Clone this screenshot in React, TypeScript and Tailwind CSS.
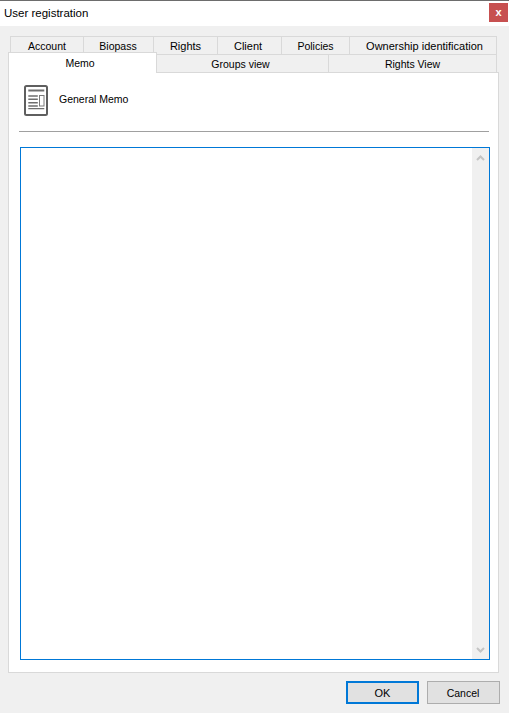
const FONT = "font-['Liberation_Sans',sans-serif]"

const ROW_ONE = [
  { label: 'Account', width: 'w-[72px]', text: 'text-[10.5px]' },
  { label: 'Biopass', width: 'w-[70px] pr-[1px]', text: 'text-[10.5px]' },
  { label: 'Rights', width: 'w-[64px]', text: 'text-[11px]' },
  { label: 'Client', width: 'w-[64px] pr-[3px]', text: 'text-[11px]' },
  { label: 'Policies', width: 'w-[68px]', text: 'text-[10.5px]' },
  { label: 'Ownership identification', width: 'w-[147px] pl-[3px]', text: 'text-[11px]' },
]

function MemoIcon() {
  return (
    <svg width="24" height="31" viewBox="0 0 24 31" className="shrink-0">
      <rect x="1" y="1" width="22" height="29" rx="1.5" fill="#fff" stroke="#5f5f5f" strokeWidth="2" />
      <path d="M4.3 5.5h16" stroke="#6e6e6e" strokeWidth="2" fill="none" />
      <path d="M4.3 11h9.5M4.3 14.3h9.5M4.3 17.7h9.5M4.3 21h9.5M4.3 23.6h16" stroke="#6e6e6e" strokeWidth="1.4" fill="none" />
      <rect x="15.5" y="10.5" width="4.5" height="10.5" fill="#fff" stroke="#7a7a7a" strokeWidth="1" />
    </svg>
  )
}

function Chevron({ up }: { up?: boolean }) {
  return (
    <svg width="9" height="6" viewBox="0 0 9 6">
      <path d={up ? 'M1 5l3.5-3.5L8 5' : 'M1 1l3.5 3.5L8 1'} stroke="#c4c4c4" strokeWidth="2" fill="none" />
    </svg>
  )
}

export default function App() {
  return (
    <div className={`${FONT} flex h-[713px] w-[509px] flex-col overflow-hidden bg-[#f0f0f0] text-[11px] text-black`}>
      <div className="flex h-[26px] shrink-0 items-start justify-between border-t border-[#6d6d6d] bg-white pl-[4px] pr-[1px]">
        <span className="mt-[3px] text-[11.5px] leading-[18px]">User registration</span>
        <div className="mt-[2px] flex h-[19px] w-[19px] items-center justify-center bg-[#c75050] text-[11px] font-bold leading-none text-white">
          x
        </div>
      </div>

      <div className="ml-[8px] mt-[10px] flex w-[491px] flex-1 flex-col">
        <div className="ml-[2px] flex h-[18px] w-[487px] border-x border-t border-[#d9d9d9]">
          {ROW_ONE.map(tab => (
            <div key={tab.label} className={`${tab.width} ${tab.text} flex items-center justify-center border-l border-[#d9d9d9] pt-[2px] leading-none first:border-l-0`}>
              {tab.label}
            </div>
          ))}
        </div>

        <div className="relative z-10 flex h-[18px]">
          <div className="-mt-[2px] flex h-[21px] w-[149px] items-start justify-center border-x border-t border-[#d9d9d9] bg-white pr-[5px] pt-[3px] text-[10.5px] leading-[14px]">
            Memo
          </div>
          <div className="flex h-[18px] w-[171px] items-center justify-center border-t border-[#d9d9d9] pr-[4px] pt-[2px] text-[10.5px] leading-none">
            Groups view
          </div>
          <div className="flex h-[18px] w-[169px] items-center justify-center border-x border-t border-[#d9d9d9] pt-[2px] text-[10.5px] leading-none">
            Rights View
          </div>
        </div>

        <div className="flex flex-1 flex-col border border-[#d9d9d9] bg-white">
          <div className="flex h-[58px] items-start pl-[15px] pt-[12px]">
            <MemoIcon />
            <span className="ml-[11px] mt-[6px] text-[10.5px] leading-[16px]">General Memo</span>
          </div>
          <div className="ml-[10px] h-px w-[470px] bg-[#a0a0a0]" />
          <div className="ml-[11px] mt-[15px] flex h-[513px] w-[470px] justify-end border border-[#0078d7] bg-white">
            <div className="flex w-[17px] flex-col items-center justify-between bg-[#f0f0f0] pb-[6px] pr-[1px] pt-[7px]">
              <Chevron up />
              <Chevron />
            </div>
          </div>
        </div>
      </div>

      <div className="flex h-[40px] shrink-0 items-start justify-end gap-[8px] pr-[9px] pt-[8px]">
        <button className="h-[23px] w-[73px] border-2 border-[#0078d7] bg-[#e1e1e1] pt-[2px] leading-none">OK</button>
        <button className="h-[23px] w-[73px] border border-[#adadad] bg-[#e1e1e1] pr-[1px] pt-[2px] text-[10.5px] leading-none">Cancel</button>
      </div>
    </div>
  )
}
